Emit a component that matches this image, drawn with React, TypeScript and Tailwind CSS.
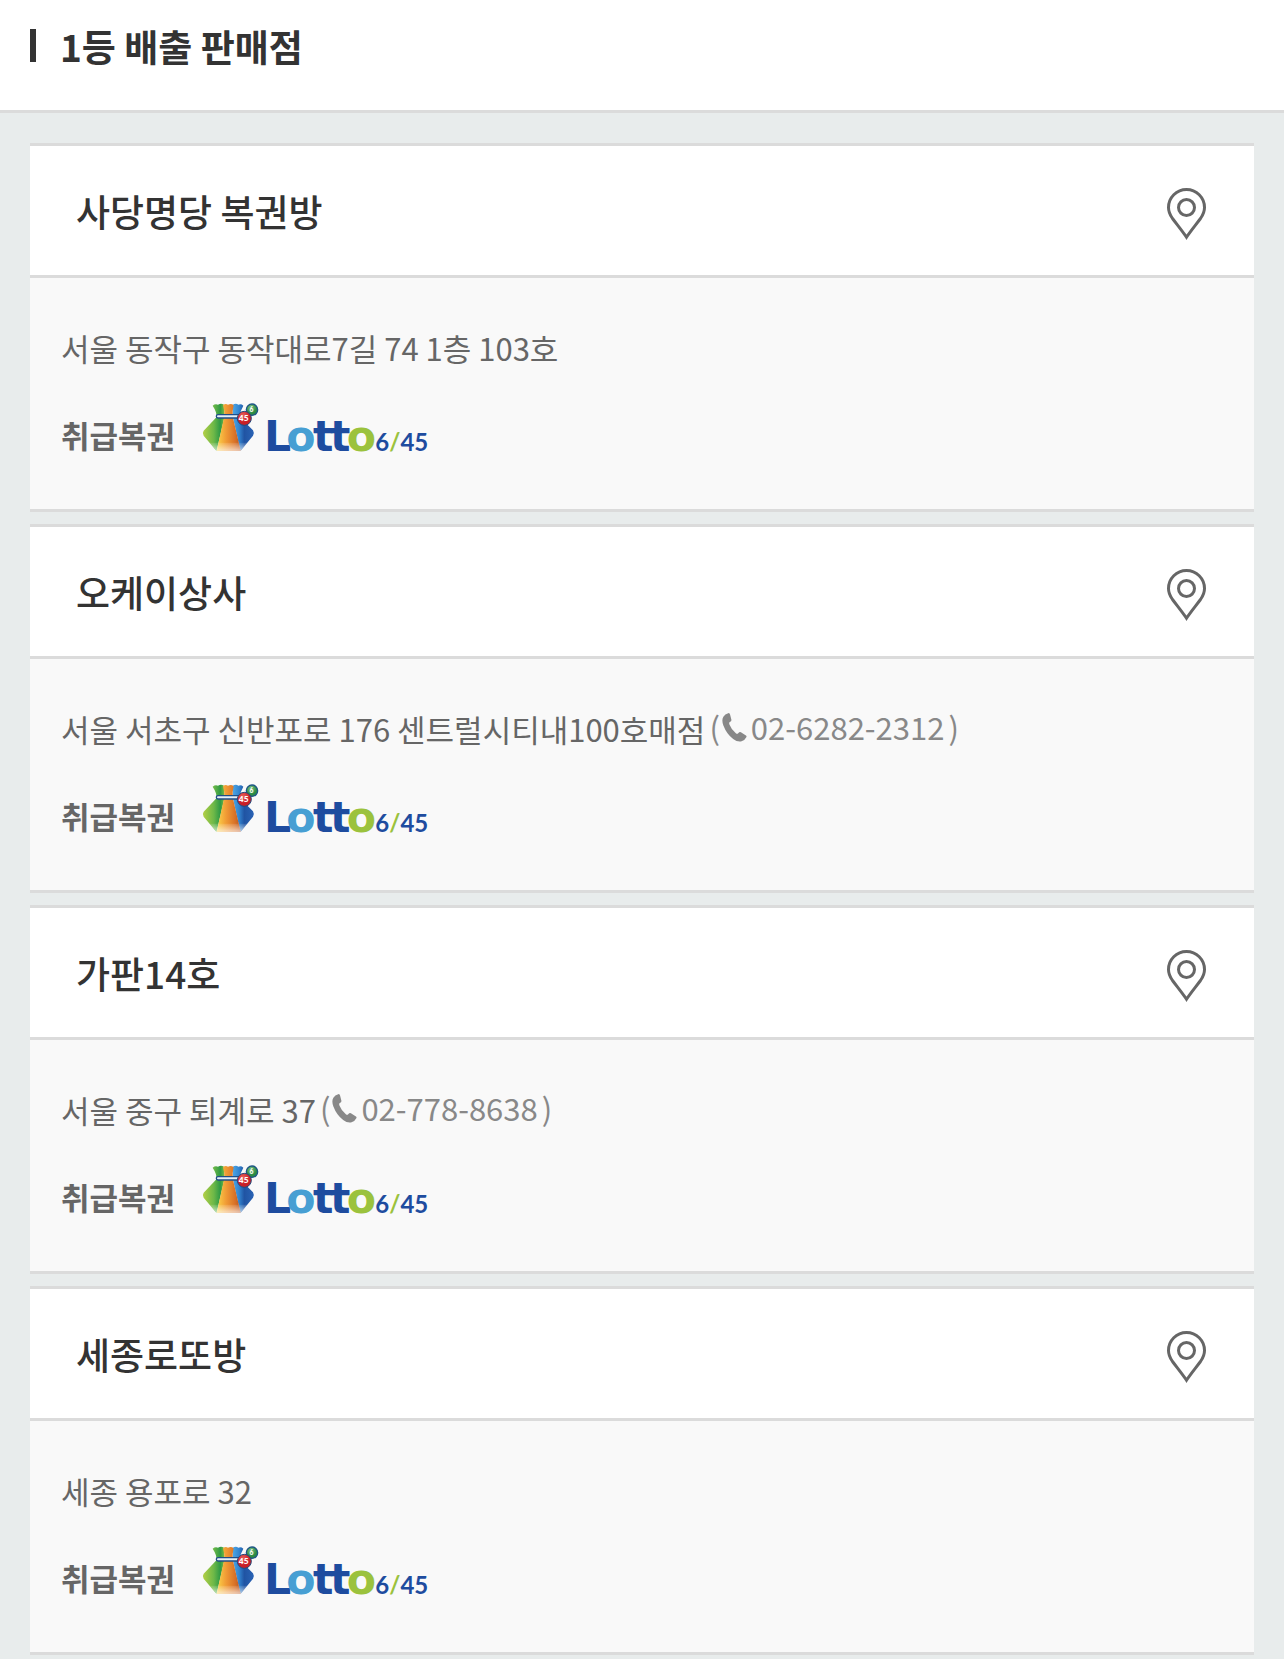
type Store = { name: string; address: string; phone?: string };

const stores: Store[] = [
  { name: "사당명당 복권방", address: "서울 동작구 동작대로7길 74 1층 103호" },
  { name: "오케이상사", address: "서울 서초구 신반포로 176 센트럴시티내100호매점", phone: "02-6282-2312" },
  { name: "가판14호", address: "서울 중구 퇴계로 37", phone: "02-778-8638" },
  { name: "세종로또방", address: "세종 용포로 32" },
];

function PinIcon() {
  return (
    <svg width="39" height="52" viewBox="0 0 39 52" fill="none" stroke="#666" strokeWidth="3" aria-hidden="true">
      <path d="M19.5 49.2 C16 44 10 36.500 5.500 30.500 C3 27 1.500 23.500 1.500 19.500 A18 18 0 0 1 37.500 19.500 C37.500 23.500 36 27 33.500 30.500 C29 36.500 23 44 19.500 49.200 Z" />
      <circle cx="19.500" cy="19.500" r="8" />
    </svg>
  );
}

function PhoneIcon() {
  return (
    <svg width="25" height="29" viewBox="0 0 74 86" fill="#888" aria-hidden="true">
      <path d="M20 0 Q23 0 24 5 L28 21 Q28 25 23 27 Q20 29 22 34 Q28 50 41 60 Q45 63 48 60 Q52 55 56 57 L71 67 Q74 69 72 72 Q67 82 58 84 Q46 87 33 77 Q14 63 4 37 Q-2 20 4 11 Q8 4 20 0 Z" />
    </svg>
  );
}

function LottoLogo({ id }: { id: string }) {
  const green = `green-${id}`;
  const orange = `orange-${id}`;
  const blue = `blue-${id}`;
  const fade = `fade-${id}`;
  const red = `red-${id}`;
  const ball = `ball-${id}`;
  return (
    <svg width="224" height="50" viewBox="36 37 672 150" className="overflow-visible" role="img" aria-label="Lotto 6/45">
      <defs>
        <linearGradient id={green} x1="0" x2="1">
          <stop offset="0" stopColor="#b4cf45" />
          <stop offset="0.5" stopColor="#6db848" />
          <stop offset="0.8" stopColor="#2f9a45" />
          <stop offset="1" stopColor="#7fb944" />
        </linearGradient>
        <linearGradient id={orange} x1="0" x2="1">
          <stop offset="0" stopColor="#fbd449" />
          <stop offset="0.4" stopColor="#f09a35" />
          <stop offset="0.75" stopColor="#d97328" />
          <stop offset="1" stopColor="#b9541f" />
        </linearGradient>
        <linearGradient id={blue} x1="0" x2="1">
          <stop offset="0" stopColor="#4da6e4" />
          <stop offset="0.3" stopColor="#3385d0" />
          <stop offset="0.55" stopColor="#2054a3" />
          <stop offset="1" stopColor="#2a63b5" />
        </linearGradient>
        <linearGradient id={fade} x1="0" x2="0" y1="0" y2="1">
          <stop offset="0" stopColor="#fff" stopOpacity="0.1" />
          <stop offset="1" stopColor="#fff" stopOpacity="0.65" />
        </linearGradient>
        <radialGradient id={red} cx="0.4" cy="0.3">
          <stop offset="0" stopColor="#e8605a" />
          <stop offset="1" stopColor="#c81f27" />
        </radialGradient>
        <radialGradient id={ball} cx="0.4" cy="0.3">
          <stop offset="0" stopColor="#7cc183" />
          <stop offset="1" stopColor="#2c8b43" />
        </radialGradient>
      </defs>
      <path d="M68 48 Q76 41 84 45 Q93 40 102 45 L104 80 L80 183 L77 181 L41 138 Q36 130 41 123 L80 82 Q80 66 68 48 Z" fill={`url(#${green})`} />
      <path d="M128 45 Q138 40 145 45 Q153 41 160 48 Q150 64 149 82 L189 122 Q194 130 189 138 L154 181 L151 183 L128 80 Z" fill={`url(#${blue})`} />
      <path d="M99 47 Q106 40 114 45 Q124 40 131 47 Q127 62 128 80 L152 183 L80 183 L103 80 Q104 62 99 47 Z" fill={`url(#${orange})`} />
      <path d="M59 159 L173 159 L152 183 L79 183 Z" fill={`url(#${fade})`} />
      <rect x="79" y="75" width="70" height="10" rx="5" fill="#e6f1f8" stroke="#1f4e87" strokeWidth="4" />
      <circle cx="186" cy="60" r="17" fill={`url(#${ball})`} stroke="#1d5685" strokeWidth="4" />
      <circle cx="163" cy="86" r="21" fill={`url(#${red})`} stroke="#244a7c" strokeWidth="3" />
      <g fontFamily="Lato, sans-serif" fontWeight="900" fill="#fff" textAnchor="middle">
        <text x="184" y="67" fontSize="20">6</text>
        <text x="161" y="95" fontSize="25">45</text>
      </g>
      <g fontFamily="'DejaVu Sans', sans-serif" fontWeight="700" fontSize="128" fill="#1e4c9f">
        <text x="222" y="183">L</text>
        <text x="369" y="183">t</text>
        <text x="420" y="183">t</text>
        <text x="289" y="183" fill="#479fd3">o</text>
        <text x="470" y="183" fill="#9bc23d">o</text>
      </g>
      <text x="556" y="183" fontFamily="Lato, sans-serif" fontWeight="700" fontSize="72" fill="#1e4c9f">
        6<tspan fill="#9bc23d">/</tspan>45
      </text>
    </svg>
  );
}

function StoreCard({ store, id }: { store: Store; id: string }) {
  return (
    <li className="border-y-3 border-[#dbdbdb] bg-[#f9f9f9]">
      <div className="flex items-center justify-between border-b-3 border-[#dbdbdb] bg-white pt-[37px] pb-[35px] pr-12 pl-[46px]">
        <h2 className="text-[37px] leading-[57px] font-medium text-[#333]">{store.name}</h2>
        <button type="button" className="pt-1" aria-label={`${store.name} 위치 보기`}>
          <PinIcon />
        </button>
      </div>
      <div className="px-[31px] pt-[46px] pb-[57px]">
        <div className="flex flex-wrap items-start text-[31px] leading-[48px] text-[#666]">
          <p>{store.address}</p>
          {store.phone && (
            <p className="ml-1 flex items-center leading-[44px] text-[#888]">
              <span>(</span>
              <a href={`tel:${store.phone}`} className="mr-1 ml-0.5 flex items-center gap-1">
                <PhoneIcon />
                {store.phone}
              </a>
              <span>)</span>
            </p>
          )}
        </div>
        <div className="mt-[30px] flex items-end gap-[27px]">
          <h3 className="text-[31px] leading-[34px] font-bold text-[#666]">취급복권</h3>
          <LottoLogo id={id} />
        </div>
      </div>
    </li>
  );
}

export default function App() {
  return (
    <main className="min-h-screen bg-[#e8ecec] font-['Noto_Sans_CJK_KR','Noto_Sans_KR',sans-serif]">
      <header className="flex items-start border-b-3 border-[#dbdbdb] bg-white px-[30px] pt-[18px] pb-9">
        <span className="mt-[11px] h-[33px] w-1.5 bg-[#333]" />
        <h1 className="ml-6 text-[37px] leading-[56px] font-bold text-[#333]">1등 배출 판매점</h1>
      </header>
      <ul className="flex flex-col gap-3 px-[30px] pt-[30px] pb-3">
        {stores.map((store, i) => (
          <StoreCard key={store.name} store={store} id={String(i)} />
        ))}
      </ul>
    </main>
  );
}
